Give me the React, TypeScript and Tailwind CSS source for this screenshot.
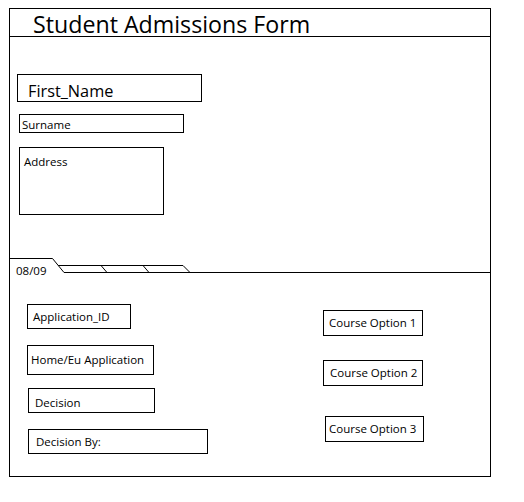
import React from "react";

const font = { fontFamily: '"Open Sans", "Noto Sans", sans-serif' };

export default function App() {
  return (
    <div className="w-[524px] h-[502px] bg-white text-black" style={font}>
      <div className="absolute left-[9px] top-[8px] w-[482px] h-[469px] border border-black flex flex-col">
        <div className="h-[28px] shrink-0 border-b border-black flex items-center pl-[23px]">
          <span className="text-[23.2px] leading-none pt-[5px]">Student Admissions Form</span>
        </div>

        <div className="h-[221px] shrink-0 flex flex-col items-start">
          <div className="ml-[7px] mt-[37px] w-[185px] h-[28px] border border-black flex items-center pl-[10px]">
            <span className="text-[16.3px] leading-none pt-[6px]">First_Name</span>
          </div>
          <div className="ml-[9px] mt-[12px] w-[165px] h-[19px] border border-black flex items-center pl-[2px]">
            <span className="text-[11.5px] leading-none pt-[2px]">Surname</span>
          </div>
          <div className="ml-[9px] mt-[14px] w-[145px] h-[68px] border border-black pl-[4px] pt-[4px] leading-none">
            <span className="text-[11.5px] leading-none">Address</span>
          </div>
        </div>

        <div className="h-[15px] shrink-0 relative">
          <svg className="absolute left-0 top-0" width="480" height="15" viewBox="0 0 480 15" fill="none" stroke="black" strokeWidth="1">
            <path d="M0 0.5 H42.5 L54 14.5 H480" />
            <path d="M48.2 7.5 H173 L180 14.5" />
            <path d="M91 7.5 L97 14.5" />
            <path d="M133 7.5 L139 14.5" />
          </svg>
          <span className="absolute left-[6px] top-[7px] text-[11.5px] leading-none">08/09</span>
        </div>

        <div className="flex-1 flex">
          <div className="w-[313px] shrink-0 pl-[17px] pt-[31px] flex flex-col items-start text-[11.5px]">
            <div className="w-[104px] h-[25px] border border-black flex items-center pl-[5px]">
              <span className="leading-none">Application_ID</span>
            </div>
            <div className="mt-[16px] w-[127px] h-[30px] border border-black flex items-center pl-[3px]">
              <span className="leading-none">Home/Eu Application</span>
            </div>
            <div className="ml-[1px] mt-[13px] w-[127px] h-[25px] border border-black flex items-center pl-[6px]">
              <span className="leading-none pt-[4px]">Decision</span>
            </div>
            <div className="ml-[1px] mt-[16px] w-[180px] h-[25px] border border-black flex items-center pl-[7px]">
              <span className="leading-none pt-[1px]">Decision By:</span>
            </div>
          </div>
          <div className="pt-[37px] flex flex-col items-start text-[11.5px]">
            <div className="w-[100px] h-[26px] border border-black flex items-center pl-[5px]">
              <span className="leading-none">Course Option 1</span>
            </div>
            <div className="mt-[24px] w-[100px] h-[26px] border border-black flex items-center pl-[6px]">
              <span className="leading-none">Course Option 2</span>
            </div>
            <div className="ml-[2px] mt-[30px] w-[99px] h-[26px] border border-black flex items-center pl-[3px]">
              <span className="leading-none">Course Option 3</span>
            </div>
          </div>
        </div>
      </div>
    </div>
  );
}
